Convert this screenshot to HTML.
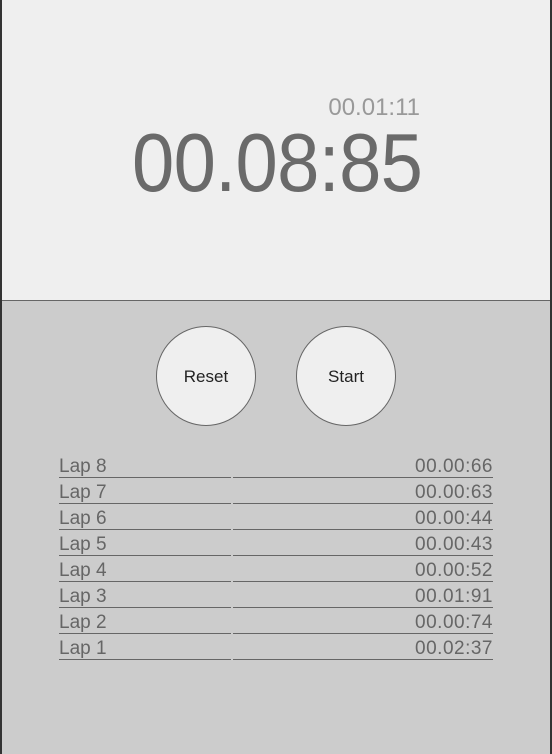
<!DOCTYPE html>
<html><head><meta charset="utf-8"><style>
*{margin:0;padding:0;box-sizing:border-box}
html,body{width:552px;height:754px;overflow:hidden;background:#ccc;font-family:"Liberation Sans",Arial,sans-serif}
.wrap{position:absolute;left:0;top:0;width:552px;height:754px;border-left:2px solid #333;border-right:2px solid #333}
.top{position:absolute;left:0;top:0;width:548px;height:301px;background:#efefef;border-bottom:1px solid #666}
.small{position:absolute;right:130px;top:96px;font-size:24px;line-height:23px;color:#999}
.big{position:absolute;left:130px;top:128px;font-size:76px;line-height:76px;letter-spacing:-0.7px;color:#6a6a6a;white-space:nowrap;transform:scaleY(1.09);transform-origin:0 64px}
.btn{position:absolute;top:326px;width:100px;height:100px;border-radius:50%;background:#efefef;border:1px solid #666;text-align:center;line-height:100px;font-size:17px;color:#222}
.row{position:absolute;left:57px;height:26px;width:434px}
.row .l{position:absolute;left:0;top:0;width:172px;height:26px;border-bottom:1px solid #666;font-size:19px;line-height:25px;padding-top:2px;color:#666}
.row .r{position:absolute;left:174px;top:0;width:260px;height:26px;border-bottom:1px solid #666;font-size:19px;line-height:25px;padding-top:2px;color:#666;text-align:right;letter-spacing:0.5px}
</style></head><body><div class="wrap">
<div class="top"><div class="small">00.01:11</div><div class="big">00.08:85</div></div>
<div class="btn" style="left:154px">Reset</div>
<div class="btn" style="left:294px">Start</div>
<div class="row" style="top:452px"><div class="l">Lap 8</div><div class="r">00.00:66</div></div>
<div class="row" style="top:478px"><div class="l">Lap 7</div><div class="r">00.00:63</div></div>
<div class="row" style="top:504px"><div class="l">Lap 6</div><div class="r">00.00:44</div></div>
<div class="row" style="top:530px"><div class="l">Lap 5</div><div class="r">00.00:43</div></div>
<div class="row" style="top:556px"><div class="l">Lap 4</div><div class="r">00.00:52</div></div>
<div class="row" style="top:582px"><div class="l">Lap 3</div><div class="r">00.01:91</div></div>
<div class="row" style="top:608px"><div class="l">Lap 2</div><div class="r">00.00:74</div></div>
<div class="row" style="top:634px"><div class="l">Lap 1</div><div class="r">00.02:37</div></div>
</div></body></html>
